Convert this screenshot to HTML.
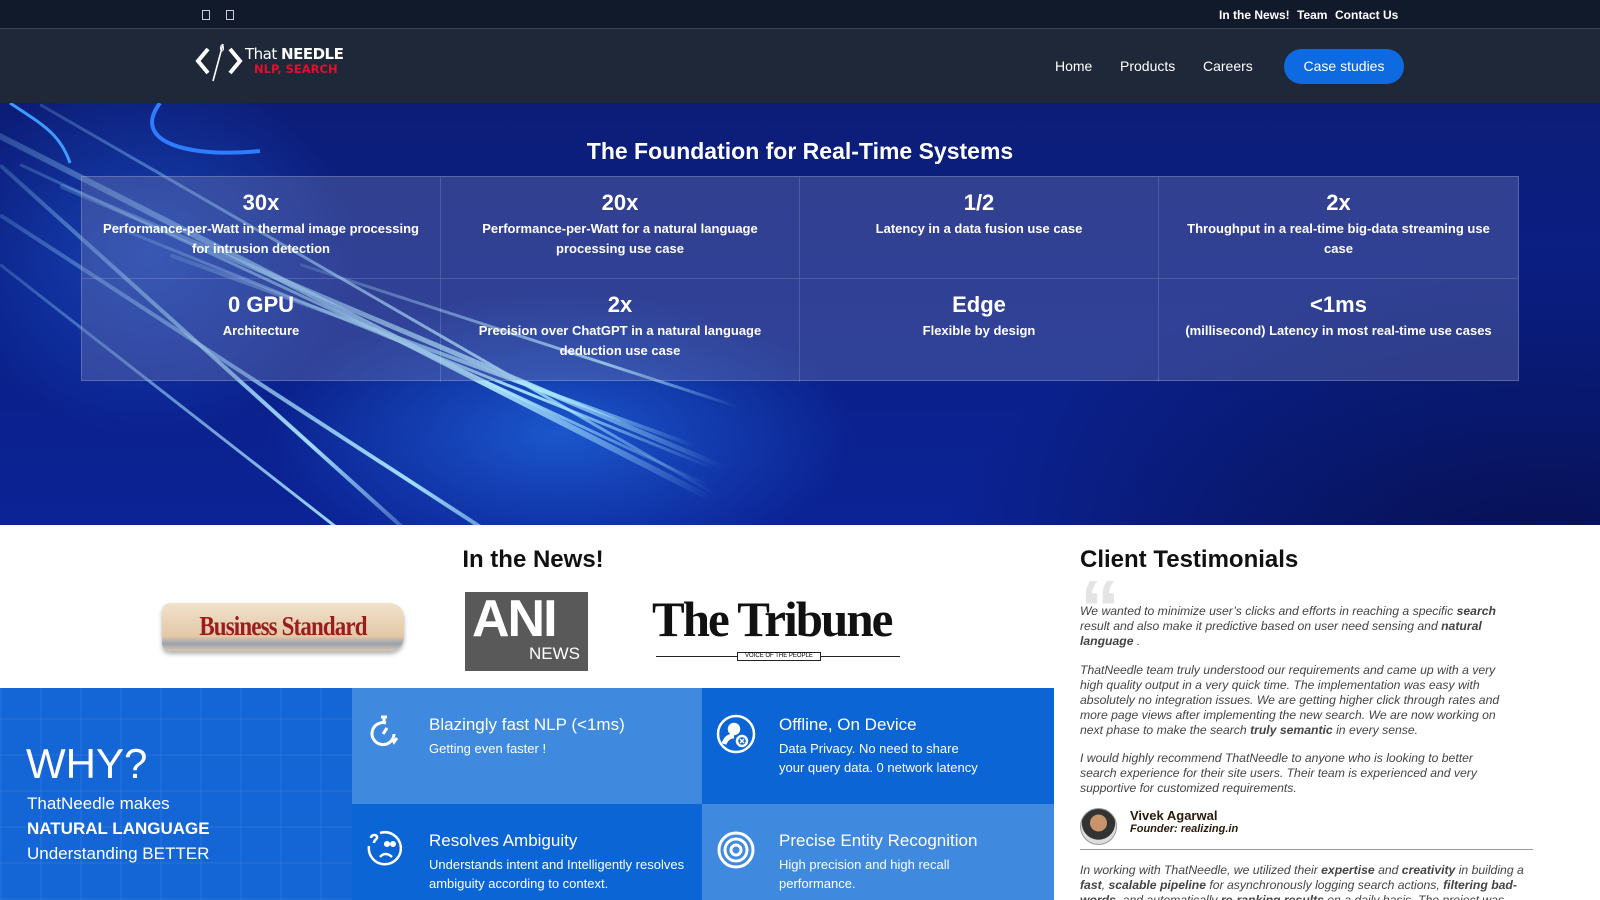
<!DOCTYPE html>
<html><head><meta charset="utf-8">
<style>
*{box-sizing:border-box;margin:0;padding:0}
html,body{width:1600px;height:900px;overflow:hidden}
body{font-family:"Liberation Sans",Arial,sans-serif;background:#fff;position:relative}
.abs{position:absolute}
#top{left:0;top:0;width:1600px;height:29px;background:#101a2b;border-bottom:1px solid #3a4352}
#top .l{position:absolute;top:10px;width:8px;height:10px;border:1px solid #ccd;}
#top .r{position:absolute;top:8px;color:#fff;font-weight:bold;font-size:12px}
#nav{left:0;top:29px;width:1600px;height:74px;background:#1e2838}
.nl{position:absolute;top:29px;color:#fff;font-size:14px}
#btn{left:1284px;top:49px;width:120px;height:35px;border-radius:18px;background:#0d6ae0;color:#fff;font-size:14px;text-align:center;line-height:35px}
#hero{left:0;top:103px;width:1600px;height:422px;overflow:hidden;
background:radial-gradient(ellipse 420px 200px at 560px 330px,rgba(40,130,255,.55),transparent 70%),
radial-gradient(ellipse 300px 260px at 150px 150px,rgba(40,120,255,.4),transparent 70%),
radial-gradient(ellipse 900px 500px at 1550px 500px,rgba(5,10,60,.9),transparent 70%),
linear-gradient(180deg,#0c1d78 0%,#0a1f86 50%,#0b2396 100%)}
.streak{position:absolute;height:3px;border-radius:3px;background:linear-gradient(90deg,rgba(150,220,255,.2),rgba(170,230,255,.95) 70%,transparent);transform-origin:left center}
#hero h1{position:absolute;top:35px;left:0;width:1600px;text-align:center;color:#fff;font-size:23px}
#grid{position:absolute;left:81px;top:73px;width:1438px;height:205px;background:rgba(120,130,180,.35);border:1px solid rgba(255,255,255,.2);display:grid;grid-template-columns:repeat(4,1fr);grid-template-rows:102px 103px}
.c{border-right:1px solid rgba(255,255,255,.15);border-bottom:1px solid rgba(255,255,255,.15);color:#fff;text-align:center;padding:13px 14px 0}
.c b{display:block;font-size:22px;margin-bottom:3px}
.c p{font-size:13px;font-weight:bold;line-height:20px}
#news h2,#test h2{font-size:24px;color:#111;position:absolute}
#why{left:0;top:688px;width:352px;height:212px;background:
repeating-linear-gradient(90deg,rgba(255,255,255,.04) 0 2px,transparent 2px 40px),
repeating-linear-gradient(0deg,rgba(255,255,255,.04) 0 2px,transparent 2px 36px),#1466d6;color:#fff}
.t{position:absolute;color:#fff}
.t h3{position:absolute;left:77px;top:27px;font-size:17px;font-weight:normal}
.t p{position:absolute;left:77px;top:52px;font-size:13px;line-height:18.5px}
.t svg{position:absolute;left:14px;top:26px}
#test{left:1080px;top:525px;width:520px;height:375px}
#test .q{font-size:12.2px;font-style:italic;color:#444;line-height:15px;position:absolute;left:0;width:446px}
</style></head><body>
<div id="top" class="abs">
 <span class="l" style="left:202px"></span><span class="l" style="left:226px"></span>
 <span class="r" style="left:1219px">In the News!</span>
 <span class="r" style="left:1297px">Team</span>
 <span class="r" style="left:1335px">Contact Us</span>
</div>
<div id="nav" class="abs">
 <svg class="abs" style="left:194px;top:12px" width="52" height="42" viewBox="0 0 52 42">
  <path d="M14 8 L4 20 L14 32" stroke="#fff" stroke-width="4" fill="none"/>
  <path d="M36 8 L46 20 L36 32" stroke="#fff" stroke-width="4" fill="none"/>
  <path d="M19 40 L29 3" stroke="#fff" stroke-width="1.6"/><ellipse cx="28" cy="7" rx="1.5" ry="3" stroke="#fff" fill="none"/>
 </svg>
 <div class="abs" style="left:245px;top:16px;color:#fff;font-size:15px;font-family:'DejaVu Sans',sans-serif;letter-spacing:-.5px">That <b>NEEDLE</b></div>
 <div class="abs" style="left:254px;top:33px;color:#e0102e;font-size:11.5px;font-weight:bold;font-family:'DejaVu Sans',sans-serif">NLP, SEARCH</div>
 <span class="nl" style="left:1055px">Home</span>
 <span class="nl" style="left:1120px">Products</span>
 <span class="nl" style="left:1203px">Careers</span>
</div>
<div id="btn" class="abs">Case studies</div>
<div id="hero" class="abs">
 <div class="streak" style="left:-20px;top:20px;width:820px;transform:rotate(27deg);height:6px"></div>
 <div class="streak" style="left:20px;top:60px;width:760px;transform:rotate(25deg)"></div>
 <div class="streak" style="left:60px;top:80px;width:720px;transform:rotate(23deg);height:5px"></div>
 <div class="streak" style="left:110px;top:120px;width:650px;transform:rotate(22deg)"></div>
 <div class="streak" style="left:170px;top:150px;width:560px;transform:rotate(20deg);height:4px"></div>
 <div class="streak" style="left:0;top:110px;width:700px;transform:rotate(33deg);height:4px"></div>
 <div class="streak" style="left:0;top:160px;width:640px;transform:rotate(38deg);height:3px"></div>
 <div class="streak" style="left:40px;top:0px;width:780px;transform:rotate(30deg);height:3px"></div>
 <div class="streak" style="left:300px;top:160px;width:460px;transform:rotate(18deg);height:3px"></div>
 <div class="streak" style="left:0;top:60px;width:600px;transform:rotate(42deg);height:4px"></div>
 <svg class="abs" style="left:0;top:0" width="400" height="140"><path d="M160 0 C130 40 190 55 260 48" stroke="#2f7cff" stroke-width="4" fill="none"/><path d="M10 0 C40 20 60 30 70 60" stroke="#3f9cff" stroke-width="3" fill="none"/></svg>
 <h1>The Foundation for Real-Time Systems</h1>
 <div id="grid">
  <div class="c"><b>30x</b><p>Performance-per-Watt in thermal image processing for intrusion detection</p></div>
  <div class="c"><b>20x</b><p>Performance-per-Watt for a natural language processing use case</p></div>
  <div class="c"><b>1/2</b><p>Latency in a data fusion use case</p></div>
  <div class="c" style="border-right:0"><b>2x</b><p>Throughput in a real-time big-data streaming use case</p></div>
  <div class="c" style="border-bottom:0"><b>0 GPU</b><p>Architecture</p></div>
  <div class="c" style="border-bottom:0"><b>2x</b><p>Precision over ChatGPT in a natural language deduction use case</p></div>
  <div class="c" style="border-bottom:0"><b>Edge</b><p>Flexible by design</p></div>
  <div class="c" style="border:0"><b>&lt;1ms</b><p>(millisecond) Latency in most real-time use cases</p></div>
 </div>
</div>
<div id="news">
 <h2 style="left:0;width:1066px;text-align:center;top:546px">In the News!</h2>
 <div class="abs" style="left:162px;top:603px;width:242px;height:48px;border-radius:8px 14px 14px 8px;background:linear-gradient(180deg,#f1e2cc,#e2c8a6 70%,#9aa0b0 85%,#d9c7b0);box-shadow:0 3px 4px rgba(0,0,0,.3);overflow:hidden">
  <div style="width:242px;text-align:center;font-family:'Liberation Serif',serif;font-weight:bold;color:#9b1c1c;font-size:27px;line-height:46px;letter-spacing:-1px;transform:scaleX(.85)">Business Standard</div></div>
 <div class="abs" style="left:465px;top:592px;width:123px;height:79px;background:#595959;color:#fff">
  <div style="font-size:52px;font-weight:bold;position:absolute;left:7px;top:-3px;letter-spacing:-2px">ANI</div>
  <div style="font-size:17px;position:absolute;right:8px;top:52px">NEWS</div></div>
 <div class="abs" style="left:652px;top:594px;width:252px;font-family:'Liberation Serif',serif;font-weight:bold;font-size:50px;color:#111;letter-spacing:-2px;line-height:50px;transform:scaleX(.98);transform-origin:left">The Tribune</div>
 <div class="abs" style="left:656px;top:656px;width:244px;height:1px;background:#222"></div>
 <div class="abs" style="left:737px;top:652px;width:84px;height:9px;border:1px solid #222;background:#fff;font-size:6px;text-align:center;line-height:7px">VOICE OF THE PEOPLE</div>
</div>
<div id="why" class="abs">
 <div style="position:absolute;left:26px;top:52px;font-size:42px">WHY?</div>
 <div style="position:absolute;left:27px;top:103px;font-size:17px;line-height:25px">ThatNeedle makes<br><b>NATURAL LANGUAGE</b><br>Understanding BETTER</div>
</div>
<div class="t abs" style="left:352px;top:688px;width:350px;height:116px;background:#3f89df">
 <svg width="36" height="36" viewBox="0 0 36 36" fill="none" stroke="#fff" stroke-width="3"><path d="M28 20 A11 11 0 1 1 20 9"/><path d="M15 3h6M18 3v5M17 20l4-6"/><path d="M26 24l2 4 3-4"/></svg>
 <h3>Blazingly fast NLP (&lt;1ms)</h3><p>Getting even faster !</p></div>
<div class="t abs" style="left:702px;top:688px;width:352px;height:116px;background:#0b65d5">
 <svg width="40" height="40" viewBox="0 0 40 40" fill="none" stroke="#fff" stroke-width="2.5"><circle cx="20" cy="20" r="18"/><circle cx="18" cy="15" r="5" fill="#fff"/><path d="M8 30c2-6 6-8 10-8" stroke-width="5"/><circle cx="26" cy="27" r="5" fill="#0b65d5"/><path d="M24 25l4 4M28 25l-4 4" stroke-width="1.5"/></svg>
 <h3>Offline, On Device</h3><p>Data Privacy. No need to share<br>your query data. 0 network latency</p></div>
<div class="t abs" style="left:352px;top:804px;width:350px;height:96px;background:#0b65d5">
 <svg width="36" height="36" viewBox="0 0 36 36" fill="none" stroke="#fff" stroke-width="2.5"><path d="M14 3 A16 16 0 1 1 3 16"/><circle cx="21" cy="14" r="1.8" fill="#fff"/><circle cx="27" cy="14" r="1.8" fill="#fff"/><path d="M14 27c3-4 8-4 12 0"/><path d="M5 8c0-4 7-4 6 0-1 2-3 2-3 5"/></svg>
 <h3>Resolves Ambiguity</h3><p>Understands intent and Intelligently resolves<br>ambiguity according to context.</p></div>
<div class="t abs" style="left:702px;top:804px;width:352px;height:96px;background:#3f89df">
 <svg width="40" height="40" viewBox="0 0 40 40" fill="none" stroke="#fff" stroke-width="3"><circle cx="20" cy="20" r="17"/><circle cx="20" cy="20" r="11"/><circle cx="20" cy="20" r="5"/></svg>
 <h3>Precise Entity Recognition</h3><p>High precision and high recall<br>performance.</p></div>
<div id="test" class="abs">
 <h2 style="left:0;top:21px">Client Testimonials</h2>
 <div class="abs" style="left:0;top:44px;font-size:80px;color:#e4e4e4;font-family:'Liberation Sans',sans-serif;font-weight:bold;line-height:80px">&ldquo;</div>
 <div class="q" style="top:79px">We wanted to minimize user’s clicks and efforts in reaching a specific <b>search</b><br>result and also make it predictive based on user need sensing and <b>natural</b><br><b>language</b> .</div>
 <div class="q" style="top:138px">ThatNeedle team truly understood our requirements and came up with a very<br>high quality output in a very quick time. The implementation was easy with<br>absolutely no integration issues. We are getting higher click through rates and<br>more page views after implementing the new search. We are now working on<br>next phase to make the search <b>truly semantic</b> in every sense.</div>
 <div class="q" style="top:226px">I would highly recommend ThatNeedle to anyone who is looking to better<br>search experience for their site users. Their team is experienced and very<br>supportive for customized requirements.</div>
 <div class="abs" style="left:0;top:283px;width:37px;height:37px;border-radius:50%;background:radial-gradient(circle at 50% 40%,#c9946c 0 30%,#333 32% 60%,#ddd 62%);border:1px solid #999"></div>
 <div class="abs" style="left:50px;top:283px;font-size:13px;font-weight:bold;color:#2a1a0a">Vivek Agarwal</div>
 <div class="abs" style="left:50px;top:298px;font-size:11px;font-weight:bold;font-style:italic;color:#2a1a0a">Founder: realizing.in</div>
 <div class="abs" style="left:0;top:324px;width:453px;height:1px;background:#999"></div>
 <div class="q" style="top:338px;width:470px">In working with ThatNeedle, we utilized their <b>expertise</b> and <b>creativity</b> in building a<br><b>fast</b>, <b>scalable pipeline</b> for asynchronously logging search actions, <b>filtering bad-</b><br><b>words</b>, and automatically <b>re-ranking results</b> on a daily basis. The project was</div>
</div>
</body></html>
